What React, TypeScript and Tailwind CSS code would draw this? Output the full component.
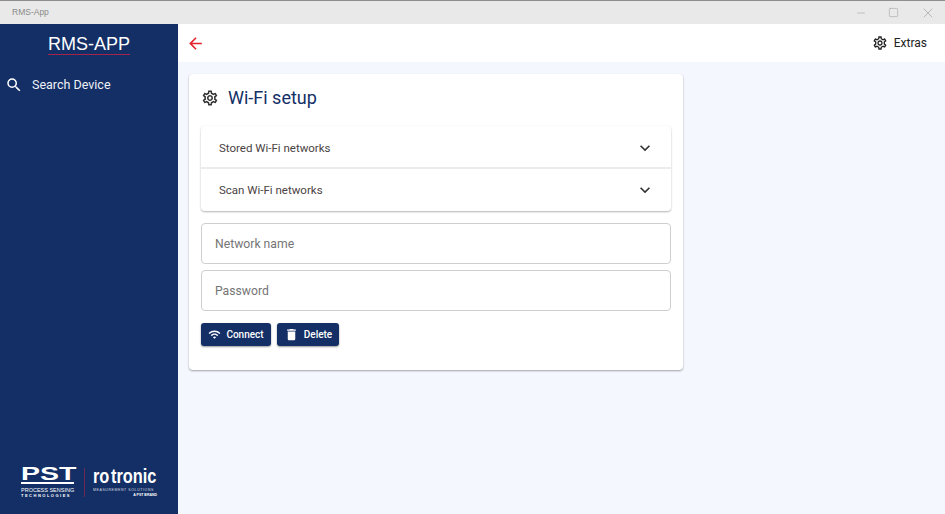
import { Minus, Square, X } from 'lucide-react';
import { MdArrowBack, MdDelete, MdExpandMore, MdOutlineSettings, MdSearch, MdWifi } from 'react-icons/md';

function Logo() {
    return (
        <div className="flex items-start text-white pl-[21px] font-['Liberation_Sans',Arial,sans-serif]">
            <div className="flex flex-col w-[54px]">
                <div className="text-[19px] leading-[15px] font-bold origin-left scale-x-[1.5] whitespace-nowrap">PST</div>
                <div className="w-[53px] h-[2px] bg-white mt-[1px]" />
                <div className="text-[5.5px] leading-[6px] mt-[3px] whitespace-nowrap">PROCESS SENSING</div>
                <div className="text-[4px] leading-[5px] font-bold tracking-[1.5px] whitespace-nowrap">TECHNOLOGIES</div>
            </div>
            <div className="w-px h-[29px] bg-[#6b2a4f] mt-[2px] ml-[9px] mr-[8px]" />
            <div className="flex flex-col w-[64px]">
                <div className="mt-[1px] text-[21px] leading-[17px] font-bold origin-left scale-x-[0.78] whitespace-nowrap">ro<span className="ml-[2px]">tronic</span></div>
                <div className="text-[3.5px] leading-[5px] mt-[4px] tracking-[0.6px] whitespace-nowrap opacity-80">MEASUREMENT SOLUTIONS</div>
                <div className="text-[3.5px] leading-[5px] font-bold whitespace-nowrap text-right">A PST BRAND</div>
            </div>
        </div>
    );
}

function AccordionRow({ label, first }: { label: string; first?: boolean }) {
    return (
        <div className={`flex items-center justify-between pl-[18px] pr-[16px] ${first ? 'h-[43px] pt-[3px] border-b-2 border-[#ececec]' : 'h-[42px]'}`}>
            <span className="text-[11.5px] mt-[1px] text-[#4a4343]">{label}</span>
            <MdExpandMore size={20} className="text-[#333]" />
        </div>
    );
}

function Field({ placeholder }: { placeholder: string }) {
    return (
        <div className="h-[41px] border border-[#cfcfcf] rounded-[4px] flex items-center px-[13px] bg-white">
            <span className="text-[12.2px] mt-[1px] text-[#757575]">{placeholder}</span>
        </div>
    );
}

export default function App() {
    return (
        <div className="w-[945px] h-[514px] flex flex-col overflow-hidden bg-[#f5f7ff] font-['Roboto',Arial,sans-serif]">
            <div className="h-[24px] shrink-0 bg-[#e9e9e9] border-t border-[#8e8e8e] flex items-center justify-between pl-[12px] pr-[9px] font-['Liberation_Sans',Arial,sans-serif]">
                <span className="text-[8.5px] text-[#8a8a8a]">RMS-App</span>
                <div className="flex items-center gap-[21px] text-[#969696]">
                    <Minus size={12} strokeWidth={1} />
                    <Square size={11} strokeWidth={1.1} />
                    <X size={16} strokeWidth={0.9} />
                </div>
            </div>

            <div className="flex flex-1 min-h-0">
                <aside className="w-[178px] shrink-0 bg-[#132f66] flex flex-col text-white">
                    <div className="flex justify-center pt-[11px]">
                        <span className="text-[18px] leading-[19px] border-b border-[#a3264a] font-['Liberation_Sans',Arial,sans-serif]">RMS-APP</span>
                    </div>
                    <div className="flex items-center mt-[21px] pl-[5px] gap-[9px]">
                        <MdSearch size={18} />
                        <span className="text-[12.5px] text-[#eef1f7]">Search Device</span>
                    </div>
                    <div className="mt-auto pb-[16px]">
                        <Logo />
                    </div>
                </aside>

                <main className="flex-1 flex flex-col min-w-0">
                    <header className="h-[38px] shrink-0 bg-white flex items-center justify-between pl-[8px] pr-[18px]">
                        <MdArrowBack size={19} className="text-[#e3222b]" />
                        <div className="flex items-center gap-[6px] text-[#222]">
                            <MdOutlineSettings size={16} />
                            <span className="text-[12px]">Extras</span>
                        </div>
                    </header>

                    <div className="pl-[11px] pt-[12px]">
                        <section className="w-[494px] h-[296px] bg-white rounded-[4px] shadow-[0_1px_2px_rgba(0,0,0,0.35)] px-[12px]">
                            <div className="flex items-center h-[47px] gap-[9px]">
                                <MdOutlineSettings size={18} className="text-[#333]" />
                                <h1 className="text-[18px] text-[#132f66]">Wi-Fi setup</h1>
                            </div>
                            <div className="mt-[5px] rounded-[4px] bg-white shadow-[0_1px_2px_rgba(0,0,0,0.3)]">
                                <AccordionRow label="Stored Wi-Fi networks" first />
                                <AccordionRow label="Scan Wi-Fi networks" />
                            </div>
                            <div className="mt-[12px] flex flex-col gap-[6px]">
                                <Field placeholder="Network name" />
                                <Field placeholder="Password" />
                            </div>
                            <div className="mt-[12px] flex gap-[6px]">
                                <button className="h-[23px] w-[70px] rounded-[3px] bg-[#132f66] text-white flex items-center justify-center gap-[5px] shadow-[0_1px_2px_rgba(0,0,0,0.4)]">
                                    <MdWifi size={13} />
                                    <span className="text-[10px] font-medium">Connect</span>
                                </button>
                                <button className="h-[23px] w-[62px] rounded-[3px] bg-[#132f66] text-white flex items-center justify-center gap-[5px] shadow-[0_1px_2px_rgba(0,0,0,0.4)]">
                                    <MdDelete size={15} />
                                    <span className="text-[10px] font-medium">Delete</span>
                                </button>
                            </div>
                        </section>
                    </div>
                </main>
            </div>
        </div>
    );
}
